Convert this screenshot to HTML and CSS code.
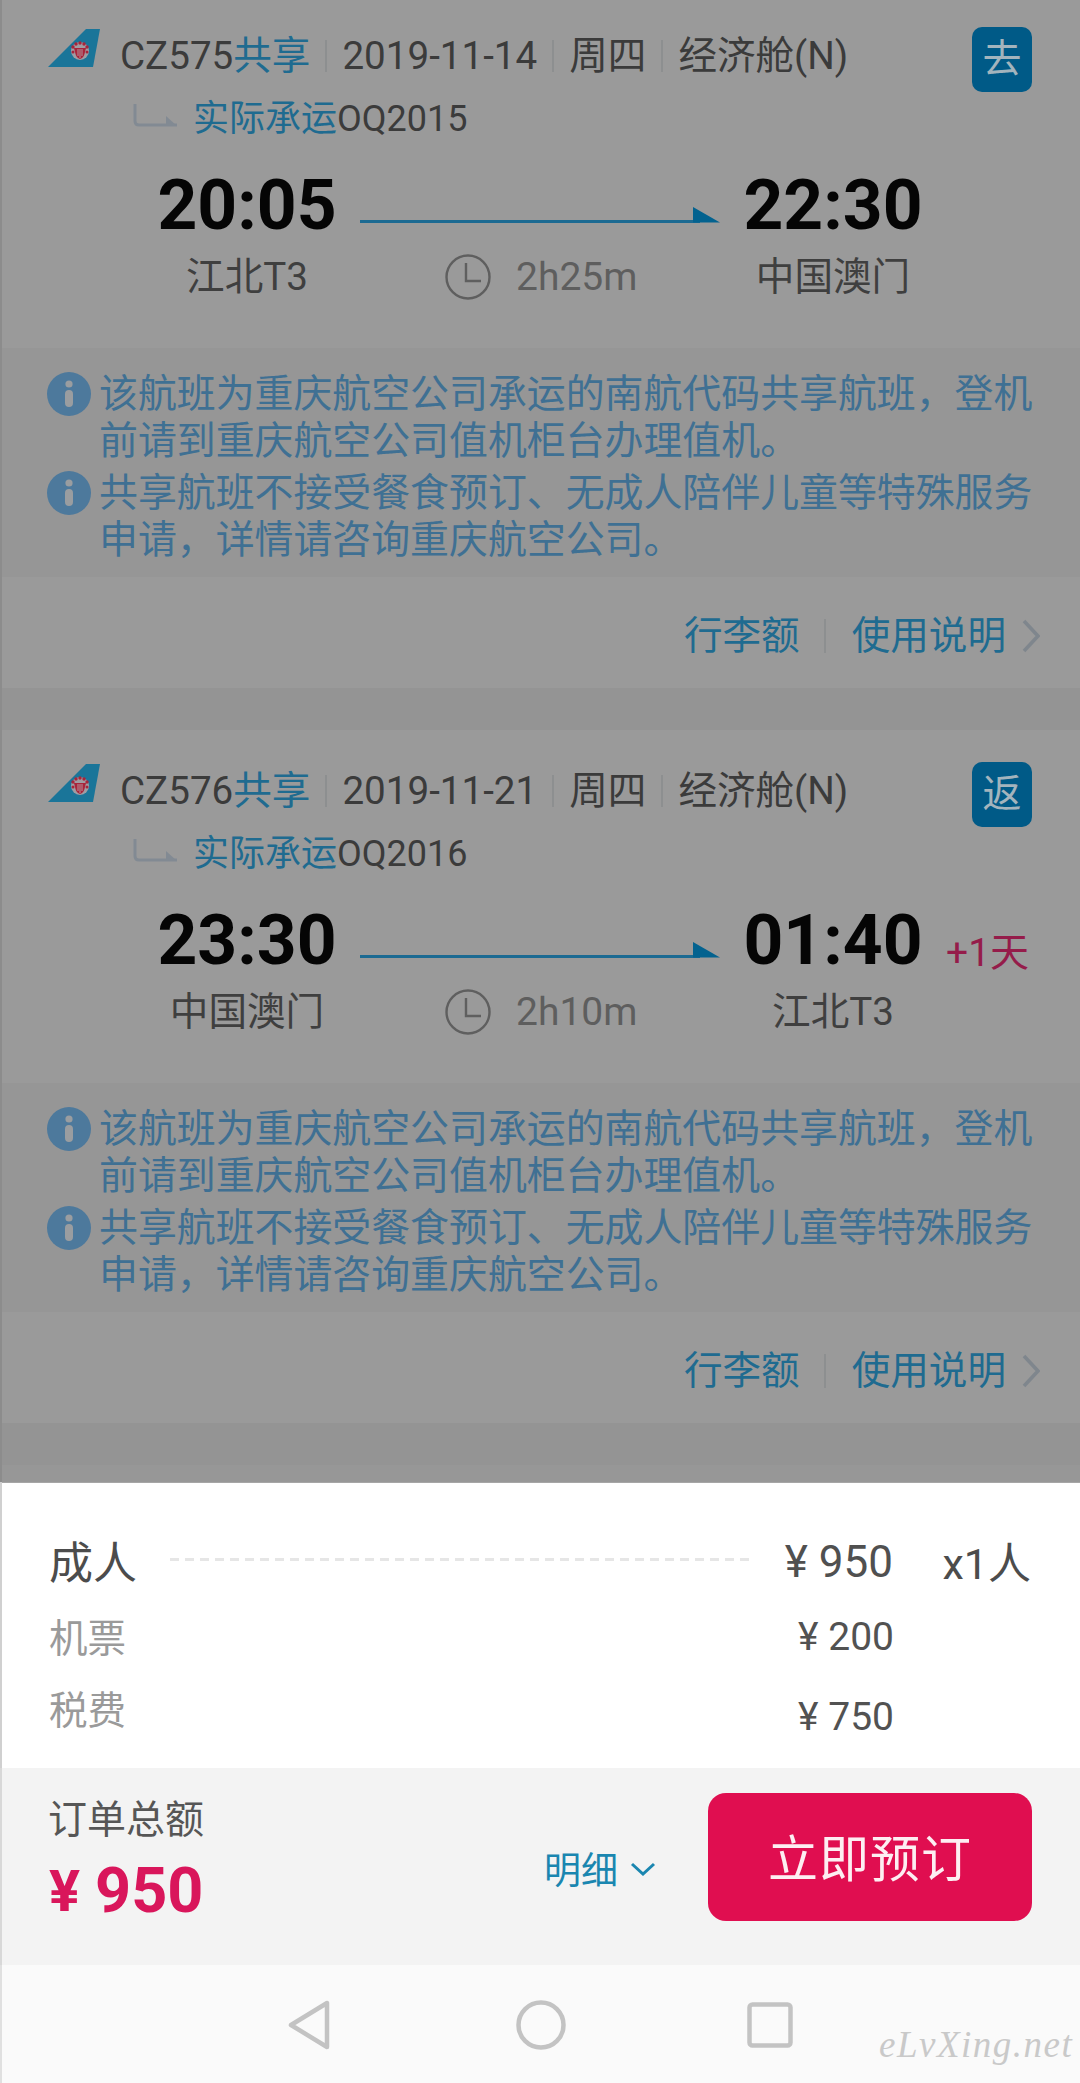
FILE: index.html
```html
<!DOCTYPE html>
<html lang="zh-CN">
<head>
<meta charset="utf-8">
<title>订单</title>
<link rel="stylesheet" href="styles.css">
</head>
<body>
<svg class="defs" width="0" height="0" aria-hidden="true">
  <symbol id="tail" viewBox="0 0 54 40">
    <polygon points="1,39 39,1 53,1 46,39" fill="#1a7599"/>
    <circle cx="33" cy="23" r="9" fill="#a09ca2"/>
    <path d="M27 20h12l-1.500 6q-1 4-4.500 5-3.500-1-4.500-5z" fill="#a8243a"/>
    <path d="M31 21v7M33 21v9M35 21v7" stroke="#b9b0b4" stroke-width="0.800" fill="none"/>
    <circle cx="26" cy="19" r="1.700" fill="#a8243a"/><circle cx="40" cy="19" r="1.700" fill="#a8243a"/>
    <circle cx="29" cy="16" r="1.700" fill="#a8243a"/><circle cx="37" cy="16" r="1.700" fill="#a8243a"/>
    <circle cx="33" cy="15" r="1.700" fill="#a8243a"/>
    <circle cx="26" cy="24" r="1.500" fill="#a8243a"/><circle cx="40" cy="24" r="1.500" fill="#a8243a"/>
  </symbol>
  <symbol id="info" viewBox="0 0 44 44">
    <circle cx="22" cy="22" r="22" fill="#4d799c"/>
    <circle cx="22" cy="12" r="3.600" fill="#9a9da0"/>
    <rect x="18" y="18" width="8" height="17" rx="4" fill="#9a9da0"/>
  </symbol>
  <symbol id="clock" viewBox="0 0 46 46">
    <circle cx="23" cy="23" r="21.500" fill="none" stroke="#5f5f5f" stroke-width="2.400"/>
    <path d="M21 9v18h15" fill="none" stroke="#5f5f5f" stroke-width="2.400"/>
  </symbol>
  <symbol id="plane-line" viewBox="0 0 360 16">
    <rect x="0" y="13" width="340" height="3" fill="#1c6a92"/>
    <polygon points="333,0 360,15.500 333,15.500" fill="#03628f"/>
  </symbol>
  <symbol id="elbow" viewBox="0 0 46 26">
    <path d="M3 1v17q0 4 4 4h38" fill="none" stroke="#828a93" stroke-width="3"/>
    <polygon points="34,13 45,23 34,23" fill="#828a93"/>
  </symbol>
  <symbol id="chev" viewBox="0 0 18 34">
    <path d="M2 2l14 15L2 32" fill="none" stroke="#7f868d" stroke-width="3.600"/>
  </symbol>
</svg>

<div class="page">
  <main class="list">
    <section class="card">
      <div class="head">
        <svg class="tail"><use href="#tail"/></svg>
        <div class="flight"><span>CZ575</span><span class="blue">共享</span><i class="sep"></i><span>2019-11-14</span><i class="sep"></i><span>周四</span><i class="sep"></i><span>经济舱(N)</span></div>
        <div class="tag">去</div>
      </div>
      <div class="carrier"><svg class="elbow"><use href="#elbow"/></svg><span class="blue">实际承运</span><span>OQ2015</span></div>
      <div class="route">
        <div class="time">20:05</div>
        <svg class="arrow"><use href="#plane-line"/></svg>
        <div class="time">22:30</div>
        <div></div>
        <div class="place">江北T3</div>
        <div class="dur"><svg class="clock"><use href="#clock"/></svg><span>2h25m</span></div>
        <div class="place">中国澳门</div>
      </div>
      <div class="notes">
        <div class="note"><svg class="info"><use href="#info"/></svg><p>该航班为重庆航空公司承运的南航代码共享航班，登机<br>前请到重庆航空公司值机柜台办理值机。</p></div>
        <div class="note"><svg class="info"><use href="#info"/></svg><p>共享航班不接受餐食预订、无成人陪伴儿童等特殊服务<br>申请，详情请咨询重庆航空公司。</p></div>
      </div>
      <div class="links"><span>行李额</span><i class="sep link-sep"></i><span>使用说明</span><svg class="chev"><use href="#chev"/></svg></div>
    </section>

    <section class="card">
      <div class="head">
        <svg class="tail"><use href="#tail"/></svg>
        <div class="flight"><span>CZ576</span><span class="blue">共享</span><i class="sep"></i><span>2019-11-21</span><i class="sep"></i><span>周四</span><i class="sep"></i><span>经济舱(N)</span></div>
        <div class="tag">返</div>
      </div>
      <div class="carrier"><svg class="elbow"><use href="#elbow"/></svg><span class="blue">实际承运</span><span>OQ2016</span></div>
      <div class="route">
        <div class="time">23:30</div>
        <svg class="arrow"><use href="#plane-line"/></svg>
        <div class="time">01:40</div>
        <div class="plus">+1天</div>
        <div class="place">中国澳门</div>
        <div class="dur"><svg class="clock"><use href="#clock"/></svg><span>2h10m</span></div>
        <div class="place">江北T3</div>
      </div>
      <div class="notes">
        <div class="note"><svg class="info"><use href="#info"/></svg><p>该航班为重庆航空公司承运的南航代码共享航班，登机<br>前请到重庆航空公司值机柜台办理值机。</p></div>
        <div class="note"><svg class="info"><use href="#info"/></svg><p>共享航班不接受餐食预订、无成人陪伴儿童等特殊服务<br>申请，详情请咨询重庆航空公司。</p></div>
      </div>
      <div class="links"><span>行李额</span><i class="sep link-sep"></i><span>使用说明</span><svg class="chev"><use href="#chev"/></svg></div>
    </section>
    <div class="card-next"></div>
  </main>

  <section class="sheet">
    <div class="row-main">
      <span class="who">成人</span>
      <span class="dash"></span>
      <span class="price">¥ 950</span>
      <span class="count">x1人</span>
    </div>
    <div class="row-sub"><span>机票</span><span class="sub-price sub-high">¥ 200</span></div>
    <div class="row-sub"><span>税费</span><span class="sub-price sub-low">¥ 750</span></div>
  </section>

  <section class="bar">
    <div class="total">
      <div class="total-label">订单总额</div>
      <div class="total-price"><span class="yen">¥</span>950</div>
    </div>
    <div class="detail"><span>明细</span><svg class="down" viewBox="0 0 26 14"><path d="M2 2l11 10L24 2" fill="none" stroke="#1a86b0" stroke-width="3"/></svg></div>
    <button class="book">立即预订</button>
  </section>

  <nav class="nav">
    <svg class="nav-i nav-back" viewBox="0 0 42 50"><path d="M39 3v44L3 25z" fill="none" stroke="#c3c3c3" stroke-width="4.500" stroke-linejoin="round"/></svg>
    <svg class="nav-i nav-home" viewBox="0 0 50 50"><circle cx="25" cy="25" r="22.500" fill="none" stroke="#c3c3c3" stroke-width="4.500"/></svg>
    <svg class="nav-i nav-rec" viewBox="0 0 46 46"><rect x="2.500" y="2.500" width="41" height="41" rx="3" fill="none" stroke="#c3c3c3" stroke-width="4.500"/></svg>
    <span class="mark">eLvXing.net</span>
  </nav>
</div>
</body>
</html>
```

FILE: styles.css
```css
* { box-sizing: border-box; }
html, body { margin: 0; padding: 0; }
body {
  font-family: Roboto, "Noto Sans CJK SC", sans-serif;
  background: #999;
}
.defs { position: absolute; }
.page {
  width: 1080px;
  height: 2083px;
  display: flex;
  flex-direction: column;
  overflow: hidden;
}
.list {
  flex: 1 1 0;
  min-height: 0;
  overflow: hidden;
  background: #949494;
  display: flex;
  flex-direction: column;
  gap: 42px;
  box-shadow: inset 2px 0 0 #8c8c8c;
}
.list > .card:first-child { margin-top: -5px; }
.card {
  background: #9a9a9a;
  padding-top: 32px;
  flex: none;
  margin-left: 2px;
}
.card-next { flex: 1 1 0; background: #979797; margin-left: 2px; }
.blue { color: #1f6b90; }

.head {
  display: flex;
  align-items: flex-start;
  height: 65px;
  padding: 0 48px 0 45px;
}
.tail { width: 54px; height: 40px; margin-top: 1px; flex: none; }
.flight {
  display: flex;
  align-items: center;
  height: 58px;
  margin-left: 19px;
  font-size: 38.600px;
  line-height: 58px;
  color: #3b3b3b;
  white-space: nowrap;
}
.sep {
  display: block;
  width: 2px;
  height: 32px;
  margin: 0 15px;
  background: #8d8f90;
  flex: none;
}
.tag {
  margin-left: auto;
  width: 60px;
  height: 65px;
  background: #005a87;
  border-radius: 10px;
  color: #a3b4bd;
  font-size: 39px;
  line-height: 65px;
  text-align: center;
  flex: none;
}

.carrier {
  display: flex;
  align-items: center;
  height: 44px;
  margin-top: 5px;
  padding-left: 130px;
  font-size: 36px;
  line-height: 44px;
  color: #3b3b3b;
}
.elbow { width: 46px; height: 26px; margin-right: 15px; margin-top: -6px; flex: none; }

.route {
  display: grid;
  grid-template-columns: 200px 360px 200px auto;
  grid-template-rows: 80px 50px;
  column-gap: 13px;
  row-gap: 6px;
  padding-left: 145px;
  margin-top: 25px;
}
.time {
  font-size: 69.500px;
  font-weight: 700;
  line-height: 80px;
  text-align: center;
  color: #050505;
}
.arrow { width: 360px; height: 16px; align-self: start; margin-top: 41px; }
.plus {
  align-self: end;
  margin-bottom: 8px;
  font-size: 39px;
  line-height: 40px;
  color: #951c4a;
  white-space: nowrap;
}
.place {
  font-size: 38.600px;
  line-height: 50px;
  text-align: center;
  color: #3f3f3f;
  white-space: nowrap;
}
.dur {
  display: flex;
  align-items: center;
  gap: 25px;
  padding-left: 85px;
  font-size: 39px;
  line-height: 50px;
  color: #5e5e5e;
}
.clock { width: 46px; height: 46px; flex: none; }

.notes {
  margin-top: 46px;
  height: 229px;
  padding: 24px 0 0 45px;
  background: #969696;
  display: flex;
  flex-direction: column;
  gap: 7px;
}
.note { display: flex; align-items: flex-start; gap: 8px; }
.info { width: 44px; height: 44px; flex: none; }
.note p {
  margin: -2px 0 0;
  font-size: 38.900px;
  line-height: 47px;
  color: #3f7093;
  white-space: nowrap;
}
.links {
  height: 111px;
  display: flex;
  align-items: center;
  justify-content: flex-end;
  padding: 6px 40px 0 0;
  font-size: 38.600px;
  color: #1f6b90;
  line-height: 50px;
}
.link-sep { margin: 0 26px 0 24px; height: 34px; }
.chev { width: 18px; height: 34px; margin-left: 16px; flex: none; }

.sheet {
  height: 286px;
  flex: none;
  background: #fff;
  padding: 50px 49px 0 49px;
  box-shadow: inset 2px 0 0 #d0d0d0, inset 0 1px 0 #a6a6a6;
}
.row-main {
  display: flex;
  align-items: center;
  height: 60px;
  color: #4c4c4c;
}
.who { font-size: 44px; width: 88px; flex: none; margin-top: -5px; }
.dash {
  width: 579px;
  height: 3px;
  margin-left: 33px;
  margin-top: -6px;
  background: repeating-linear-gradient(90deg, #e6e6e6 0 9px, transparent 9px 15px);
  flex: none;
}
.price { width: 144px; text-align: right; font-size: 44px; white-space: nowrap; color: #505050; }
.count { margin-left: auto; font-size: 43px; white-space: nowrap; margin-top: -4px; }
.row-sub {
  display: flex;
  align-items: center;
  justify-content: space-between;
  margin-top: 22px;
  font-size: 38.500px;
  line-height: 50px;
  height: 50px;
  color: #9a9a9a;
  width: 845px;
}
.sub-price { color: #525252; font-size: 39px; white-space: nowrap; }
.sub-high { margin-bottom: 4px; }
.sub-low { margin-top: 12px; }

.bar {
  height: 197px;
  flex: none;
  background: #f3f3f3;
  display: flex;
  align-items: flex-start;
  padding: 26px 48px 0 48px;
  box-shadow: inset 2px 0 0 #d8d8d8;
}
.total { width: 200px; flex: none; }
.total-label { font-size: 39px; line-height: 52px; color: #565656; white-space: nowrap; }
.total-price {
  display: flex;
  align-items: center;
  margin-top: 10px;
  font-size: 63px;
  font-weight: 700;
  line-height: 70px;
  color: #d9165b;
}
.yen { width: 47px; font-size: 58px; padding-left: 1px; }
.detail {
  display: flex;
  align-items: center;
  gap: 12px;
  margin-left: 296px;
  margin-top: 53px;
  font-size: 37px;
  line-height: 50px;
  color: #1a86b0;
  white-space: nowrap;
}
.down { width: 26px; height: 14px; margin-top: -6px; flex: none; }
.book {
  margin-left: auto;
  margin-top: -1px;
  width: 324px;
  height: 128px;
  background: #e00e50;
  border: 0;
  border-radius: 18px;
  color: #fdeef2;
  font: inherit;
  font-size: 50px;
  line-height: 1;
  letter-spacing: 1px;
  padding: 6px 0 0;
  flex: none;
}

.nav {
  height: 118px;
  flex: none;
  background: #fafafa;
  position: relative;
  display: grid;
  grid-template-columns: 42px 50px 46px;
  column-gap: 186px;
  padding: 35px 0 0 288px;
  box-shadow: inset 2px 0 0 #e0e0e0;
}
.nav-i { display: block; }
.nav-back { width: 42px; height: 50px; }
.nav-home { width: 50px; height: 50px; }
.nav-rec { width: 46px; height: 46px; margin-top: 2px; margin-left: -5px; }
.mark {
  position: absolute;
  left: 879px;
  top: 60px;
  font-family: "Liberation Serif", serif;
  font-style: italic;
  font-size: 37px;
  line-height: 40px;
  letter-spacing: 1.500px;
  color: #c9c9c9;
  white-space: nowrap;
}
```
